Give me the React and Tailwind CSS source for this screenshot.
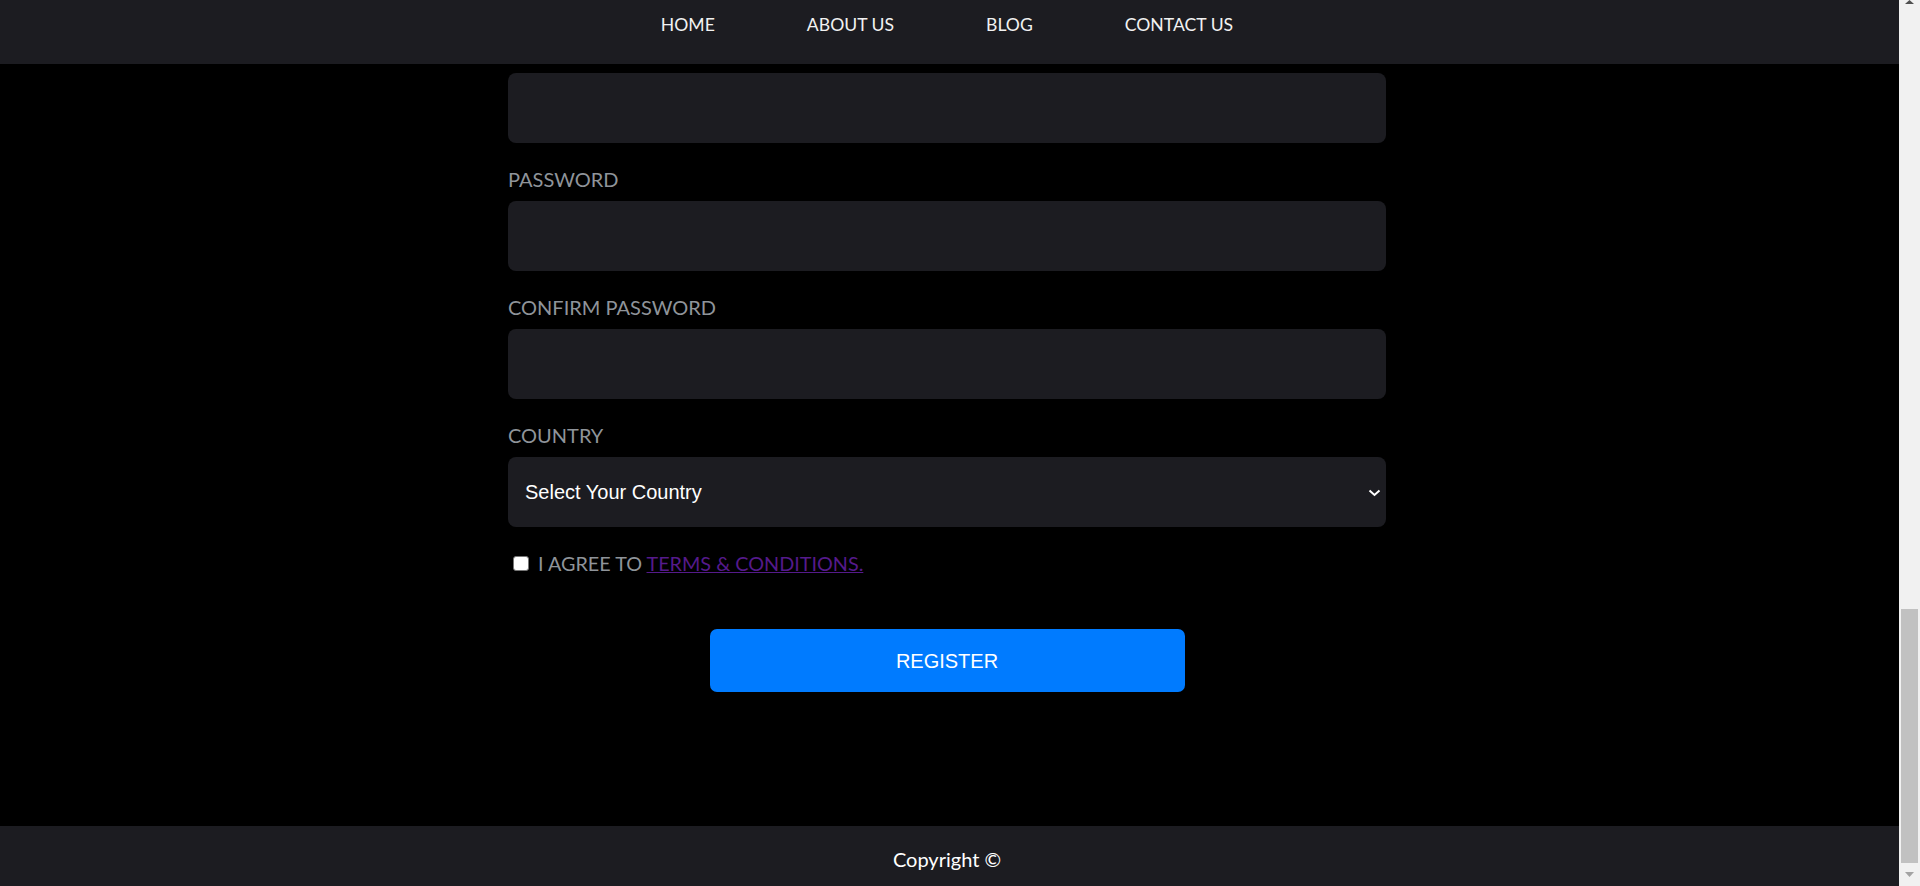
import React from "react";

function Field({ label, first }) {
  return (
    <div className="flex flex-col">
      {!first && (
        <label className="font-['Lato',sans-serif] text-[20px] leading-[25px] text-[#8f949a] mt-[24px] mb-[9px] uppercase">
          {label}
        </label>
      )}
      <input
        type={label.includes("PASSWORD") ? "password" : "text"}
        className="block w-full h-[70px] rounded-lg bg-[#1c1c21] border-0 outline-none px-[17px] text-white text-[20px] font-['Liberation_Sans',Arial,sans-serif]"
      />
    </div>
  );
}

export default function App() {
  return (
    <div className="flex w-full h-[886px] overflow-hidden bg-black">
      <div className="flex flex-col flex-1 min-w-0">
        <header className="h-16 shrink-0 bg-[#1c1c21] pt-[14px]">
          <nav className="flex justify-center gap-[92px] pr-[5px] font-['Lato',sans-serif] text-[17.6px] leading-[22px] text-[#f2f2f2]">
            <a href="#" className="uppercase">HOME</a>
            <a href="#" className="uppercase">ABOUT US</a>
            <a href="#" className="uppercase">BLOG</a>
            <a href="#" className="uppercase">CONTACT US</a>
          </nav>
        </header>

        <main className="flex-1 pt-[9px] pr-[5px]">
          <form className="w-[878px] mx-auto flex flex-col" onSubmit={(e) => e.preventDefault()}>
            <Field label="EMAIL" first />
            <Field label="PASSWORD" />
            <Field label="CONFIRM PASSWORD" />

            <label className="font-['Lato',sans-serif] text-[20px] leading-[25px] text-[#8f949a] mt-[24px] mb-[9px]">
              COUNTRY
            </label>
            <div className="relative">
              <select
                defaultValue=""
                className="appearance-none block w-full h-[70px] rounded-lg bg-[#1c1c21] border-0 outline-none pl-[17px] text-white text-[20px] font-['Liberation_Sans',Arial,sans-serif]"
              >
                <option value="">Select Your Country</option>
                <option value="us">United States</option>
                <option value="uk">United Kingdom</option>
              </select>
              <svg
                className="absolute right-[5px] top-[32px] pointer-events-none"
                width="13"
                height="8"
                viewBox="0 0 13 8"
                fill="none"
              >
                <path d="M1.5 1.5 L6.5 6 L11.5 1.5" stroke="#ffffff" strokeWidth="2" />
              </svg>
            </div>

            <div className="flex items-center mt-[24px] pl-[5px] h-[24px]">
              <input
                type="checkbox"
                className="appearance-none w-[16px] h-[15px] bg-white border border-[#767676] rounded-[3px] shrink-0"
              />
              <span className="ml-[9px] font-['Lato',sans-serif] text-[19.8px] leading-[24px] text-[#8f949a]">
                I AGREE TO{" "}
                <a href="#" className="underline text-[#551a8b]">
                  TERMS &amp; CONDITIONS.
                </a>
              </span>
            </div>

            <div className="flex justify-center mt-[54px]">
              <button
                type="submit"
                className="w-[475px] h-[63px] rounded-[7px] bg-[#007bff] text-white text-[20px] font-['Liberation_Sans',Arial,sans-serif]"
              >
                REGISTER
              </button>
            </div>
          </form>
        </main>

        <footer className="h-[60px] shrink-0 bg-[#1c1c21] pt-[21px] pr-[5px] flex justify-center">
          <p className="font-['Lato',sans-serif] text-[20px] leading-[24px] text-white">
            Copyright ©
          </p>
        </footer>
      </div>

      <div className="w-[21px] shrink-0 bg-[#f1f1f1] flex flex-col items-center">
        <div className="h-[17px] flex justify-center">
          <svg width="9" height="4" viewBox="0 0 9 4">
            <path d="M0 4 L4.5 0 L9 4 Z" fill="#505050" />
          </svg>
        </div>
        <div className="flex-1" />
        <div className="w-[17px] h-[254px] bg-[#c1c1c1]" />
        <div className="h-[23px] flex items-center justify-center">
          <svg width="9" height="5" viewBox="0 0 9 5">
            <path d="M0 0 L9 0 L4.5 5 Z" fill="#a3a3a3" />
          </svg>
        </div>
      </div>
    </div>
  );
}
